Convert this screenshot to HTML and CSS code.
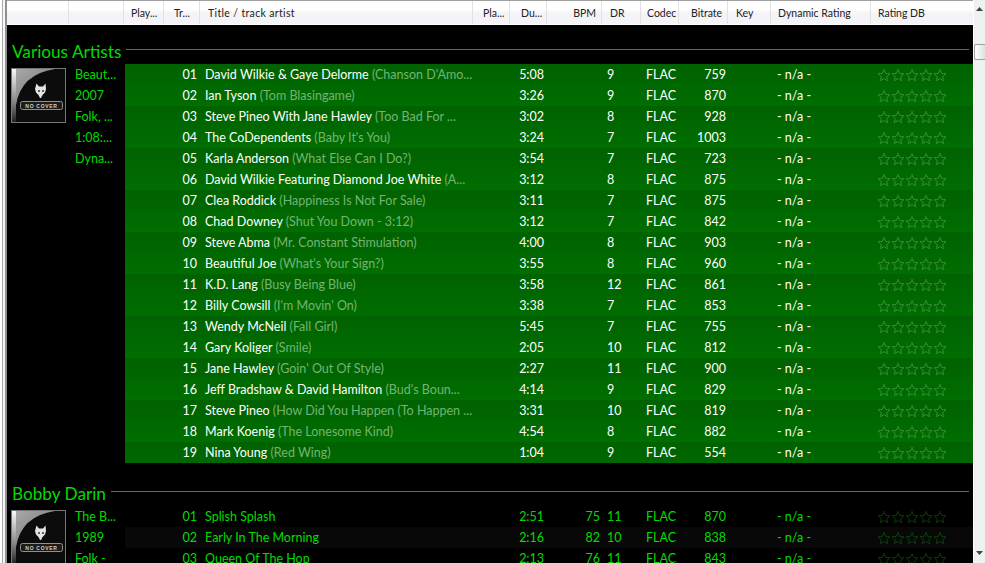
FILE: index.html
```html
<!DOCTYPE html>
<html lang="en">
<head>
<meta charset="utf-8">
<title>Playlist</title>
<link rel="stylesheet" href="styles.css">
</head>
<body>
<svg class="defs" width="0" height="0" aria-hidden="true">
  <defs>
    <linearGradient id="sweep" x1="0" y1="0" x2="1" y2="1"><stop offset="0" stop-color="#a8a8a8"/><stop offset="1" stop-color="#707070"/></linearGradient>
    <linearGradient id="band" x1="0" y1="0" x2="0" y2="1"><stop offset="0" stop-color="#f8f8f8"/><stop offset=".6" stop-color="#8a8a8a"/><stop offset="1" stop-color="#222"/></linearGradient>
    <symbol id="cover" viewBox="0 0 55 55">
      <rect x=".5" y=".5" width="54" height="54" fill="#0c0c0c" stroke="#777"/>
      <path d="M5 37Q10 6 44 1H5Z" fill="url(#sweep)"/>
      <rect x="1" y="1" width="4" height="53" fill="url(#band)"/>
      <path d="M25.500 15.500l2.500 3h4l2.500-3l.5 5.500l-1 3.500l-2.500 2.500l-1.500 3h-1l-1.500-3l-2.500-2.500l-1-3.500z" fill="#e4e4e4"/>
      <circle cx="28" cy="23" r="1" fill="#333"/><circle cx="32" cy="23" r="1" fill="#333"/>
      <rect x="9.500" y="33.500" width="42" height="8" rx="2" fill="#1c1c1c" stroke="#909090"/>
      <text x="30.500" y="39.700" text-anchor="middle" class="nocover">NO COVER</text>
    </symbol>
    <symbol id="star5" viewBox="0 0 70 14">
      <path id="s" d="M7 1.500l1.700 3.900 4.200.4-3.200 2.800 1 4.100-3.700-2.200-3.700 2.200 1-4.100L1.100 5.800l4.200-.4z"/>
      <use href="#s" x="14"/><use href="#s" x="28"/><use href="#s" x="42"/><use href="#s" x="56"/>
    </symbol>
  </defs>
</svg>
<div class="frame">
  <div class="edge"></div>
  <main class="view">
    <header class="thead">
      <span class="th"></span><span class="th"></span><span class="th">Play...</span><span class="th">Tr...</span><span class="th th-title">Title / track artist</span><span class="th">Pla...</span><span class="th">Du...</span><span class="th th-r">BPM</span><span class="th">DR</span><span class="th">Codec</span><span class="th">Bitrate</span><span class="th">Key</span><span class="th">Dynamic Rating</span><span class="th">Rating DB</span>
    </header>
    <section class="group">
      <h2 class="ghead"><span>Various Artists</span><i class="rule"></i></h2>
      <div class="gbody">
        <aside class="album">
          <svg class="art"><use href="#cover"/></svg>
          <ul class="meta"><li>Beaut...</li><li>2007</li><li>Folk, ...</li><li>1:08:...</li><li>Dyna...</li></ul>
        </aside>
        <div class="tracks sel">
          <div class="row"><span class="tr">01</span><span class="title">David Wilkie &amp; Gaye Delorme <em>(Chanson D'Amo...</em></span><span class="dur">5:08</span><span class="dr">9</span><span class="codec">FLAC</span><span class="rate">759</span><span class="dyn">- n/a -</span><svg class="stars"><use href="#star5"/></svg></div>
          <div class="row"><span class="tr">02</span><span class="title">Ian Tyson <em>(Tom Blasingame)</em></span><span class="dur">3:26</span><span class="dr">9</span><span class="codec">FLAC</span><span class="rate">870</span><span class="dyn">- n/a -</span><svg class="stars"><use href="#star5"/></svg></div>
          <div class="row"><span class="tr">03</span><span class="title">Steve Pineo With Jane Hawley <em>(Too Bad For ...</em></span><span class="dur">3:02</span><span class="dr">8</span><span class="codec">FLAC</span><span class="rate">928</span><span class="dyn">- n/a -</span><svg class="stars"><use href="#star5"/></svg></div>
          <div class="row"><span class="tr">04</span><span class="title">The CoDependents <em>(Baby It's You)</em></span><span class="dur">3:24</span><span class="dr">7</span><span class="codec">FLAC</span><span class="rate">1003</span><span class="dyn">- n/a -</span><svg class="stars"><use href="#star5"/></svg></div>
          <div class="row"><span class="tr">05</span><span class="title">Karla Anderson <em>(What Else Can I Do?)</em></span><span class="dur">3:54</span><span class="dr">7</span><span class="codec">FLAC</span><span class="rate">723</span><span class="dyn">- n/a -</span><svg class="stars"><use href="#star5"/></svg></div>
          <div class="row"><span class="tr">06</span><span class="title">David Wilkie Featuring Diamond Joe White <em>(A...</em></span><span class="dur">3:12</span><span class="dr">8</span><span class="codec">FLAC</span><span class="rate">875</span><span class="dyn">- n/a -</span><svg class="stars"><use href="#star5"/></svg></div>
          <div class="row"><span class="tr">07</span><span class="title">Clea Roddick <em>(Happiness Is Not For Sale)</em></span><span class="dur">3:11</span><span class="dr">7</span><span class="codec">FLAC</span><span class="rate">875</span><span class="dyn">- n/a -</span><svg class="stars"><use href="#star5"/></svg></div>
          <div class="row"><span class="tr">08</span><span class="title">Chad Downey <em>(Shut You Down - 3:12)</em></span><span class="dur">3:12</span><span class="dr">7</span><span class="codec">FLAC</span><span class="rate">842</span><span class="dyn">- n/a -</span><svg class="stars"><use href="#star5"/></svg></div>
          <div class="row"><span class="tr">09</span><span class="title">Steve Abma <em>(Mr. Constant Stimulation)</em></span><span class="dur">4:00</span><span class="dr">8</span><span class="codec">FLAC</span><span class="rate">903</span><span class="dyn">- n/a -</span><svg class="stars"><use href="#star5"/></svg></div>
          <div class="row"><span class="tr">10</span><span class="title">Beautiful Joe <em>(What's Your Sign?)</em></span><span class="dur">3:55</span><span class="dr">8</span><span class="codec">FLAC</span><span class="rate">960</span><span class="dyn">- n/a -</span><svg class="stars"><use href="#star5"/></svg></div>
          <div class="row"><span class="tr">11</span><span class="title">K.D. Lang <em>(Busy Being Blue)</em></span><span class="dur">3:58</span><span class="dr">12</span><span class="codec">FLAC</span><span class="rate">861</span><span class="dyn">- n/a -</span><svg class="stars"><use href="#star5"/></svg></div>
          <div class="row"><span class="tr">12</span><span class="title">Billy Cowsill <em>(I'm Movin' On)</em></span><span class="dur">3:38</span><span class="dr">7</span><span class="codec">FLAC</span><span class="rate">853</span><span class="dyn">- n/a -</span><svg class="stars"><use href="#star5"/></svg></div>
          <div class="row"><span class="tr">13</span><span class="title">Wendy McNeil <em>(Fall Girl)</em></span><span class="dur">5:45</span><span class="dr">7</span><span class="codec">FLAC</span><span class="rate">755</span><span class="dyn">- n/a -</span><svg class="stars"><use href="#star5"/></svg></div>
          <div class="row"><span class="tr">14</span><span class="title">Gary Koliger <em>(Smile)</em></span><span class="dur">2:05</span><span class="dr">10</span><span class="codec">FLAC</span><span class="rate">812</span><span class="dyn">- n/a -</span><svg class="stars"><use href="#star5"/></svg></div>
          <div class="row"><span class="tr">15</span><span class="title">Jane Hawley <em>(Goin' Out Of Style)</em></span><span class="dur">2:27</span><span class="dr">11</span><span class="codec">FLAC</span><span class="rate">900</span><span class="dyn">- n/a -</span><svg class="stars"><use href="#star5"/></svg></div>
          <div class="row"><span class="tr">16</span><span class="title">Jeff Bradshaw &amp; David Hamilton <em>(Bud's Boun...</em></span><span class="dur">4:14</span><span class="dr">9</span><span class="codec">FLAC</span><span class="rate">829</span><span class="dyn">- n/a -</span><svg class="stars"><use href="#star5"/></svg></div>
          <div class="row"><span class="tr">17</span><span class="title">Steve Pineo <em>(How Did You Happen (To Happen ...</em></span><span class="dur">3:31</span><span class="dr">10</span><span class="codec">FLAC</span><span class="rate">819</span><span class="dyn">- n/a -</span><svg class="stars"><use href="#star5"/></svg></div>
          <div class="row"><span class="tr">18</span><span class="title">Mark Koenig <em>(The Lonesome Kind)</em></span><span class="dur">4:54</span><span class="dr">8</span><span class="codec">FLAC</span><span class="rate">882</span><span class="dyn">- n/a -</span><svg class="stars"><use href="#star5"/></svg></div>
          <div class="row"><span class="tr">19</span><span class="title">Nina Young <em>(Red Wing)</em></span><span class="dur">1:04</span><span class="dr">9</span><span class="codec">FLAC</span><span class="rate">554</span><span class="dyn">- n/a -</span><svg class="stars"><use href="#star5"/></svg></div>
        </div>
      </div>
    </section>
    <section class="group group-next">
      <h2 class="ghead"><span>Bobby Darin</span><i class="rule"></i></h2>
      <div class="gbody">
        <aside class="album">
          <svg class="art"><use href="#cover"/></svg>
          <ul class="meta"><li>The B...</li><li>1989</li><li>Folk -</li></ul>
        </aside>
        <div class="tracks">
          <div class="row"><span class="tr">01</span><span class="title">Splish Splash</span><span class="dur">2:51</span><span class="bpm">75</span><span class="dr">11</span><span class="codec">FLAC</span><span class="rate">870</span><span class="dyn">- n/a -</span><svg class="stars"><use href="#star5"/></svg></div>
          <div class="row"><span class="tr">02</span><span class="title">Early In The Morning</span><span class="dur">2:16</span><span class="bpm">82</span><span class="dr">10</span><span class="codec">FLAC</span><span class="rate">838</span><span class="dyn">- n/a -</span><svg class="stars"><use href="#star5"/></svg></div>
          <div class="row"><span class="tr">03</span><span class="title">Queen Of The Hop</span><span class="dur">2:13</span><span class="bpm">76</span><span class="dr">11</span><span class="codec">FLAC</span><span class="rate">843</span><span class="dyn">- n/a -</span><svg class="stars"><use href="#star5"/></svg></div>
        </div>
      </div>
    </section>
  </main>
  <aside class="scrollbar">
    <svg class="arrow" viewBox="0 0 7 4"><path d="M3.500 0L7 4H0z"/></svg>
    <div class="thumb"></div>
    <svg class="arrow arrow-down" viewBox="0 0 7 4"><path d="M0 0H7L3.500 4z"/></svg>
  </aside>
</div>
</body>
</html>
```
FILE: styles.css
```css
* { box-sizing: border-box; }
html, body { margin: 0; height: 100%; overflow: hidden; background: #f0f0f0; }
body { font-family: "Lato", "Open Sans", sans-serif; font-size: 12.500px; color: #00dc00; }
.defs { position: absolute; }
.nocover { font-family: "Liberation Sans", sans-serif; font-size: 5px; font-weight: 700; letter-spacing: .7px; fill: #d0d0d0; }

.frame { display: flex; height: 563px; }
.edge { width: 7px; flex: none; background: linear-gradient(90deg, #fff 0 2px, #a8a8a8 2px 3px, #f6f6f6 3px 5px, #8f8f94 5px 7px); }
.view { width: 966px; flex: none; background: #000; overflow: hidden; }

.thead { display: grid; grid-template-columns: 62px 55px 40px 36px 273px 37px 37px 55px 39px 38px 49px 43px 100px 102px; height: 25px; border-top: 1px solid #a0a0a0; border-bottom: 1px solid #fff; background: linear-gradient(#fff 0 35%, #f4f4f8 55% 100%); }
.th { display: flex; align-items: center; padding-left: 7px; font-size: 10.500px; color: #222; border-right: 1px solid #e2e2e2; white-space: nowrap; overflow: hidden; }
.th:last-child { border-right: 0; }
.th:nth-child(4) { padding-left: 10px; }
.th-title { padding-left: 8px; letter-spacing: .35px; }
.th:nth-child(6) { padding-left: 10px; }
.th:nth-child(7) { padding-left: 11px; }
.th-r { justify-content: flex-end; padding: 0 5px 0 0; }
.th:nth-child(9) { padding-left: 8px; }
.th:nth-child(10) { padding-left: 6px; }
.th:nth-child(11) { padding-left: 12px; }
.th:nth-child(12) { padding-left: 8px; }

.group-next { margin-top: 4px; }
.ghead { display: flex; align-items: center; gap: 5px; height: 39px; margin: 0; padding: 12px 4px 2px 5px; font-size: 17.200px; font-weight: 400; color: #00dc00; white-space: nowrap; }
.ghead span { padding-top: 4px; }
.rule { flex: 1; height: 1px; background: #1c9a1c; }

.gbody { display: flex; }
.album { width: 118px; flex: none; display: flex; align-items: flex-start; padding-left: 4px; }
.art { width: 55px; height: 55px; margin-top: 4px; flex: none; }
.meta { list-style: none; margin: 0 0 0 9px; padding: 0; }
.meta li { height: 21px; line-height: 21px; white-space: nowrap; }

.tracks { width: 848px; flex: none; }
.row { display: grid; grid-template-columns: 39px 36px 273px 37px 37px 55px 39px 38px 49px 43px 100px 102px; align-items: center; height: 21px; line-height: 20px; white-space: nowrap; }
.row:nth-child(even) { background: #080808; }
.tracks.sel .row { background: linear-gradient(#006200, #006800); color: #fff; }
.tracks.sel .row:nth-child(even) { background: linear-gradient(#006800, #006e00); }

.tr { grid-column: 2; text-align: right; padding-right: 3px; }
.title { grid-column: 3; padding-left: 5px; overflow: hidden; }
.title em { font-style: normal; color: #74b474; }
.dur { grid-column: 5; text-align: right; padding-right: 3px; }
.bpm { grid-column: 6; text-align: right; padding-right: 2px; }
.dr { grid-column: 7; padding-left: 5px; }
.codec { grid-column: 8; padding-left: 5px; }
.rate { grid-column: 9; text-align: right; padding-right: 2px; }
.dyn { grid-column: 11; padding-left: 6px; }
.stars { grid-column: 12; width: 70px; height: 14px; margin-left: 6px; fill: none; stroke: #0e520e; stroke-width: 1; stroke-dasharray: 1.200 .4; }
.tracks.sel .stars { stroke: #479a47; }

.scrollbar { flex: 1; display: flex; flex-direction: column; align-items: center; padding-top: 7px; background: linear-gradient(90deg, #fff 0 1px, #f0f0f0 1px); }
.arrow { width: 7px; height: 4px; fill: #444; flex: none; }
.thumb { width: 11px; height: 16px; margin: 33px 0 0 1px; border: 1px solid #a0a0a0; border-right: 0; border-radius: 2px 0 0 2px; background: linear-gradient(90deg, #fff, #e0e0e0); flex: none; }
.arrow-down { margin-top: auto; margin-bottom: 8px; }
```
